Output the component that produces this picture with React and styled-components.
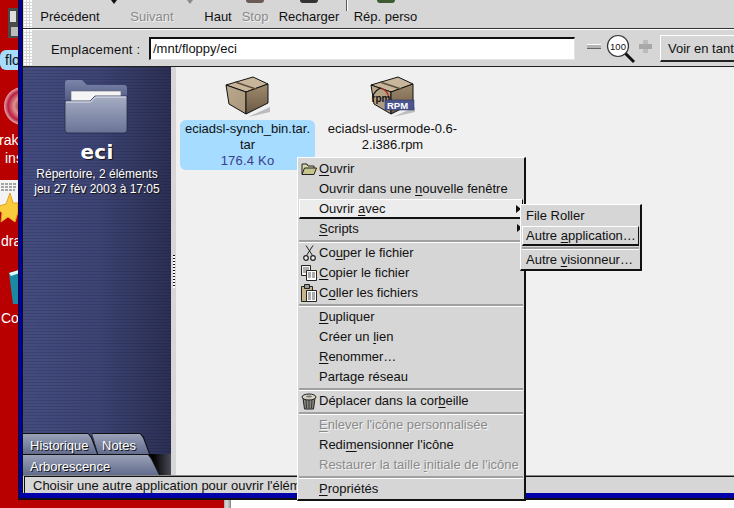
import React from 'react';
import styled, { createGlobalStyle } from 'styled-components';

const GlobalStyle = createGlobalStyle`
  html, body { margin: 0; padding: 0; background: #fff; }
  * { box-sizing: border-box; }
`;

const FONT = '"Liberation Sans", Arial, sans-serif';

function BoxIcon({ rpm }) {
  const id = rpm ? 'r' : 't';
  return (
    <BoxSvg viewBox="0 0 46 41">
      <defs>
        <linearGradient id={id + 'l'} x1="0" y1="0" x2="1" y2="1">
          <stop offset="0" stopColor="#bba98e" />
          <stop offset="1" stopColor="#a8957a" />
        </linearGradient>
        <linearGradient id={id + 'f'} x1="0" y1="0" x2="0" y2="1">
          <stop offset="0" stopColor="#a08b6e" />
          <stop offset="1" stopColor="#6a5944" />
        </linearGradient>
      </defs>
      <path d="M6 31 L23 41 L45 31 L45 36 L23 41 Z" fill="#999" opacity="0.6" />
      <path d="M1 9 L28 1 L43 8 L21 16 Z" fill="#c8b69c" stroke="#111" strokeWidth="1" strokeLinejoin="round" />
      <path d="M1 9 L21 16 L21 38 L4 28 Z" fill={`url(#${id}l)`} stroke="#111" strokeWidth="1" strokeLinejoin="round" />
      <path d="M21 16 L43 8 L43 27 L21 38 Z" fill={`url(#${id}f)`} stroke="#111" strokeWidth="1" strokeLinejoin="round" />
      <path d="M10 6 L31 13" stroke="#5e4e3a" strokeWidth="1.500" />
      {rpm && (
        <>
          <path d="M3 20 A13 13 0 0 1 11 12" fill="none" stroke="#111" strokeWidth="1.300" />
          <path d="M11 12 A13 13 0 0 1 19 22" fill="none" stroke="#b02418" strokeWidth="1.300" />
          <text x="1.500" y="26" fontFamily={FONT} fontWeight="700" fontSize="10" fill="#111">rpm</text>
          <rect x="15" y="24" width="29" height="10" fill="#4b5590" stroke="#2b3060" strokeWidth="0.500" />
          <text x="17" y="32.800" fontFamily={FONT} fontWeight="700" fontSize="9.500" fill="#fff">RPM</text>
        </>
      )}
    </BoxSvg>
  );
}

function FolderIcon() {
  return (
    <svg width="64" height="55" viewBox="0 0 64 55">
      <defs>
        <linearGradient id="fb" x1="0" y1="0" x2="0" y2="1">
          <stop offset="0" stopColor="#7c86aa" />
          <stop offset="1" stopColor="#4c5680" />
        </linearGradient>
        <linearGradient id="ff" x1="0" y1="0" x2="0" y2="1">
          <stop offset="0" stopColor="#a6aec4" />
          <stop offset="1" stopColor="#6a7396" />
        </linearGradient>
      </defs>
      <path d="M1 4 Q1 1 4 1 L18 1 L23 6 L60 6 Q63 6 63 9 L63 20 L1 24 Z" fill="url(#fb)" />
      <path d="M7 12 L57 12 L57 22 L7 24 Z" fill="#f4f4f4" stroke="#667" strokeWidth="0.600" />
      <path d="M1 22 L26 22 L31 17 L63 17 L63 51 Q63 54 60 54 L4 54 Q1 54 1 51 Z" fill="url(#ff)" stroke="#262c48" strokeWidth="0.800" />
      <path d="M2 23 L26.500 23 L31.500 18 L62 18" fill="none" stroke="#e4e8f2" strokeWidth="1" />
    </svg>
  );
}

function OpenFolderGlyph() {
  return (
    <svg width="16" height="14" viewBox="0 0 16 14">
      <path d="M1 12 L1 2 L6 2 L7 4 L13 4 L13 6" fill="#d8d8a8" stroke="#222" strokeWidth="1" />
      <path d="M1 12.500 L3.500 6 L15.500 6 L13 12.500 Z" fill="#c4c48c" stroke="#222" strokeWidth="1" />
    </svg>
  );
}

function ScissorsGlyph() {
  return (
    <svg width="13" height="16" viewBox="0 0 13 16">
      <path d="M3 0.500 L9.500 10.500 M10 0.500 L3.500 10.500" stroke="#222" strokeWidth="1" fill="none" />
      <circle cx="3" cy="13" r="2.300" fill="#f0f0f0" stroke="#222" strokeWidth="1.200" />
      <circle cx="10" cy="13" r="2.300" fill="#f0f0f0" stroke="#222" strokeWidth="1.200" />
    </svg>
  );
}

function CopyGlyph() {
  return (
    <svg width="16" height="16" viewBox="0 0 16 16">
      <path d="M0.500 0.500 H9.500 V10.500 H0.500 Z" fill="#f4f4f4" stroke="#222" />
      <path d="M2 3 H8 M2 5 H8 M2 7 H8" stroke="#666" />
      <path d="M5.500 5.500 H15.500 V15.500 H5.500 Z" fill="#fff" stroke="#222" />
      <path d="M7 8 H14 M7 10 H14 M7 12 H14" stroke="#555" strokeDasharray="3 1" />
    </svg>
  );
}

function PasteGlyph() {
  return (
    <svg width="16" height="18" viewBox="0 0 16 18">
      <path d="M0.500 2.500 H11.500 V17.500 H0.500 Z" fill="#c8b48c" stroke="#222" />
      <path d="M3.500 0.500 H8.500 V4.500 H3.500 Z" fill="#999" stroke="#222" />
      <path d="M5.500 6.500 H15.500 V17.500 H5.500 Z" fill="#fff" stroke="#222" />
      <path d="M7 9 H14 M7 11 H14 M7 13 H14 M7 15 H14" stroke="#555" strokeDasharray="3 1" />
    </svg>
  );
}

function TrashGlyph() {
  return (
    <svg width="16" height="17" viewBox="0 0 16 17">
      <path d="M2 5 L3.500 16 H12.500 L14 5 Z" fill="#8a8a80" stroke="#222" />
      <path d="M5 6 L5.500 15 M8 6 V15 M11 6 L10.500 15" stroke="#333" />
      <ellipse cx="8" cy="4" rx="7" ry="3" fill="#d4d4c4" stroke="#222" />
      <ellipse cx="8" cy="3.500" rx="3" ry="1" fill="#777" />
    </svg>
  );
}

function Magnifier() {
  return (
    <MagnifierSvg viewBox="0 0 32 32">
      <path d="M18 18 L28 28" stroke="#111" strokeWidth="3" />
      <circle cx="12" cy="12" r="10.500" fill="#fff" stroke="#333" strokeWidth="1.200" />
      <text x="12" y="15.500" textAnchor="middle" fontFamily={FONT} fontSize="9.500" fill="#111">100</text>
    </MagnifierSvg>
  );
}

export default function App() {
  return (
    <Screen>
      <GlobalStyle />
      <Desktop>
        <FloppyIcon viewBox="0 0 12 30" width="12" height="30">
          <path d="M0 0 H12 V30 H0 Z" fill="#4a4a4a" />
          <path d="M2 3 H8 V14 H2 Z" fill="#ddd" />
          <path d="M3 19 H12 V28 H3 Z" fill="#bbb" />
        </FloppyIcon>
        <SelectedLabel>flo</SelectedLabel>
        <CdIcon />
        <DeskLabel $top={131}>rak</DeskLabel>
        <DeskLabel $top={149} $left={5}>ins</DeskLabel>
        <StarIcon viewBox="0 0 18 46" width="18" height="46">
          <path d="M0 0 H18 V24 L0 32 Z" fill="#f4f4f4" />
          <path d="M1 4 H17 M1 7 H17 M1 10 H15" stroke="#555" strokeDasharray="3 1" />
          <path d="M10 13 L13 23 L18 23 L18 32 L15 42 L8 37 L1 42 L2 33 L-4 27 L6 24 Z" fill="#f8cc3c" stroke="#e8a020" />
        </StarIcon>
        <DeskLabel $top={232} $left={1}>dra</DeskLabel>
        <TrashIcon viewBox="0 0 10 34" width="10" height="34">
          <path d="M0 3 L10 0 V34 H4 Z" fill="#1a8aa4" />
          <path d="M0 3 L10 0 V3 L2 6 Z" fill="#dff" />
        </TrashIcon>
        <DeskLabel $top={309} $left={1}>Co</DeskLabel>
      </Desktop>

      <Window>
        <Toolbar>
          <Handle />
          <ToolButtons>
            <ToolButton $w={72}>Précédent</ToolButton>
            <ToolDrop />
            <ToolButton $w={60} $dim>Suivant</ToolButton>
            <ToolDrop $dim />
            <ToolButton $w={40}>Haut</ToolButton>
            <ToolButton $w={34} $dim $tip="#6b5a55">Stop</ToolButton>
            <ToolButton $w={74} $tip="#333">Recharger</ToolButton>
            <ToolSep />
            <ToolButton $w={75} $tip="#3d5a32">Rép. perso</ToolButton>
          </ToolButtons>
        </Toolbar>

        <LocationBar>
          <Handle />
          <LocationLabel>Emplacement :</LocationLabel>
          <LocationInput>/mnt/floppy/eci</LocationInput>
          <ZoomMinus />
          <Magnifier />
          <ZoomPlus />
          <ViewButton>Voir en tant</ViewButton>
        </LocationBar>

        <Body>
          <Sidebar>
            <FolderSlot><FolderIcon /></FolderSlot>
            <SideTitle>eci</SideTitle>
            <SideInfo>Répertoire, 2 éléments</SideInfo>
            <SideInfo>jeu 27 fév 2003 à 17:05</SideInfo>
            <Tabs>
              <TabRow>
                <Tab $w={75} $left={0} $right={6}>Historique</Tab>
                <Tab $w={58} $left={6} $right={6} $overlap>Notes</Tab>
              </TabRow>
              <TabRow $dark>
                <Tab $w={137} $left={0} $right={8}>Arborescence</Tab>
              </TabRow>
            </Tabs>
          </Sidebar>
          <Splitter><Grip /></Splitter>
          <Files>
            <FileItem>
              <BoxIcon />
              <FileName $selected>
                eciadsl-synch_bin.tar.<br />tar
                <FileSize>176.4 Ko</FileSize>
              </FileName>
            </FileItem>
            <FileItem>
              <BoxIcon rpm />
              <FileName>eciadsl-usermode-0.6-<br />2.i386.rpm</FileName>
            </FileItem>
          </Files>
        </Body>

        <StatusBar>
          <StatusText>Choisir une autre application pour ouvrir l'élément</StatusText>
        </StatusBar>
      </Window>

      <BelowWindow>
        <RedStrip />
        <ScrollStub />
      </BelowWindow>

      <Menu>
        <MenuItem><Glyph><OpenFolderGlyph /></Glyph><Mn>O</Mn>uvrir</MenuItem>
        <MenuItem>Ouvrir dans une <Mn>n</Mn>ouvelle fenêtre</MenuItem>
        <MenuItem $active $sub>Ouvrir <Mn>a</Mn>vec</MenuItem>
        <MenuItem $sub><Mn>S</Mn>cripts</MenuItem>
        <MenuSep />
        <MenuItem><Glyph><ScissorsGlyph /></Glyph>Co<Mn>u</Mn>per le fichier</MenuItem>
        <MenuItem><Glyph><CopyGlyph /></Glyph><Mn>C</Mn>opier le fichier</MenuItem>
        <MenuItem><Glyph><PasteGlyph /></Glyph>C<Mn>o</Mn>ller les fichiers</MenuItem>
        <MenuSep />
        <MenuItem><Mn>D</Mn>upliquer</MenuItem>
        <MenuItem>Créer un <Mn>l</Mn>ien</MenuItem>
        <MenuItem><Mn>R</Mn>enommer…</MenuItem>
        <MenuItem>Partage réseau</MenuItem>
        <MenuSep />
        <MenuItem><Glyph><TrashGlyph /></Glyph>Déplacer dans la cor<Mn>b</Mn>eille</MenuItem>
        <MenuSep />
        <MenuItem $disabled><Mn>E</Mn>nlever l'icône personnalisée</MenuItem>
        <MenuItem>Redi<Mn>m</Mn>ensionner l'icône</MenuItem>
        <MenuItem $disabled>Restaurer la taille <Mn>i</Mn>nitiale de l'icône</MenuItem>
        <MenuSep />
        <MenuItem><Mn>P</Mn>ropriétés</MenuItem>
      </Menu>

      <SubMenu>
        <SubItem>File Roller</SubItem>
        <SubItem $active>Autre <Mn>a</Mn>pplication…</SubItem>
        <MenuSep />
        <SubItem>Autre <Mn>v</Mn>isionneur…</SubItem>
      </SubMenu>
    </Screen>
  );
}

const Screen = styled.div`
  position: relative;
  width: 734px;
  height: 508px;
  overflow: hidden;
  display: grid;
  grid-template-columns: 18px 716px;
  grid-template-rows: 500px 8px;
  font-family: ${FONT};
  font-size: 13px;
  color: #111;
`;

const Desktop = styled.div`
  position: relative;
  overflow: hidden;
  background: #b80000;
`;

const FloppyIcon = styled.svg`
  position: absolute;
  left: 8px;
  top: 8px;
`;

const SelectedLabel = styled.div`
  position: absolute;
  left: 0;
  top: 50px;
  width: 24px;
  height: 20px;
  line-height: 20px;
  padding-left: 5px;
  border-radius: 6px;
  background: #a5dcff;
  font-size: 14px;
`;

const CdIcon = styled.div`
  position: absolute;
  left: 4px;
  top: 87px;
  width: 38px;
  height: 38px;
  border-radius: 50%;
  background: radial-gradient(circle, #fff 0 3px, #c06060 4px 6px, #e09090 9px, #b82040 15px, #e8a8b0 19px);
`;

const DeskLabel = styled.div`
  position: absolute;
  left: ${p => p.$left ?? -1}px;
  top: ${p => p.$top}px;
  height: 18px;
  line-height: 18px;
  font-size: 14px;
  color: #fff;
  white-space: nowrap;
`;

const StarIcon = styled.svg`
  position: absolute;
  left: 0;
  top: 180px;
  overflow: visible;
`;

const TrashIcon = styled.svg`
  position: absolute;
  left: 9px;
  top: 270px;
`;

const Window = styled.div`
  display: flex;
  flex-direction: column;
  height: 500px;
  background: #d6d6d6;
  border-left: 1px solid #111;
  box-shadow: inset 3px 0 0 #0000a8, inset 4px 0 0 #111;
  padding: 0 0 5px 4px;
  position: relative;
  &::after {
    content: '';
    position: absolute;
    left: 0;
    right: 0;
    bottom: 0;
    height: 5px;
    background: #0000a8;
    border-bottom: 2px solid #111;
  }
`;

const Toolbar = styled.div`
  display: flex;
  height: 29px;
  flex: none;
  border-bottom: 1px solid #333;
  background: #d6d6d6;
`;

const Handle = styled.div`
  flex: none;
  width: 9px;
  margin-left: 1px;
  background-image: radial-gradient(circle at 1px 1px, #fff 0.800px, #9a9a9a 1px, transparent 1.300px);
  background-size: 3px 3px;
  background-color: #d6d6d6;
`;

const ToolButtons = styled.div`
  display: flex;
  padding-left: 1px;
`;

const ToolButton = styled.div`
  width: ${p => p.$w}px;
  position: relative;
  padding-top: 9px;
  line-height: 16px;
  text-align: center;
  white-space: nowrap;
  color: ${p => (p.$dim ? '#8a8a8a' : '#111')};
  ${p => p.$dim && 'text-shadow: 1px 1px 0 #f0f0f0;'}
  &::before {
    content: ${p => (p.$tip ? "''" : 'none')};
    position: absolute;
    top: 0;
    left: 50%;
    width: 18px;
    height: 3px;
    margin-left: -9px;
    background: ${p => p.$tip};
    border-radius: 0 0 9px 9px;
  }
`;

const ToolDrop = styled.div`
  width: 16px;
  height: 4px;
  display: flex;
  justify-content: center;
  &::before {
    content: '';
    width: 0;
    height: 0;
    border-left: 3px solid transparent;
    border-right: 3px solid transparent;
    border-top: 4px solid ${p => (p.$dim ? '#8a8a8a' : '#111')};
  }
`;

const ToolSep = styled.div`
  width: 2px;
  height: 11px;
  background: #fff;
  border-left: 1px solid #555;
`;

const LocationBar = styled.div`
  display: flex;
  align-items: center;
  height: 38px;
  flex: none;
  border-top: 1px solid #fff;
  border-bottom: 1px solid #222;
  background: #d6d6d6;
  & > * {
    flex: none;
  }
  & > ${Handle} {
    align-self: stretch;
  }
`;

const LocationLabel = styled.div`
  width: 97px;
  margin-left: 18px;
  margin-right: 1px;
  padding-top: 2px;
  letter-spacing: 0.200px;
  white-space: nowrap;
`;

const LocationInput = styled.div`
  width: 426px;
  height: 23px;
  line-height: 20px;
  padding-left: 2px;
  background: #fff;
  border: 1px solid #e4e4e4;
  border-top: 2px solid #111;
  border-left: 2px solid #111;
  margin-right: 12px;
  white-space: nowrap;
`;

const ZoomMinus = styled.div`
  width: 14px;
  height: 5px;
  margin-right: 5px;
  margin-bottom: 4px;
  background: #b4b4b4;
  border-top: 1px solid #fff;
  border-bottom: 1px solid #666;
`;

const MagnifierSvg = styled.svg`
  width: 32px;
  height: 32px;
  margin-top: 3px;
`;

const ZoomPlus = styled.div`
  width: 13px;
  height: 13px;
  margin-left: 1px;
  margin-right: 8px;
  margin-bottom: 4px;
  background:
    linear-gradient(#a8a8a8, #a8a8a8) center / 13px 5px no-repeat,
    linear-gradient(#bcbcbc, #bcbcbc) center / 5px 13px no-repeat;
`;

const ViewButton = styled.div`
  height: 27px;
  width: 100px;
  line-height: 25px;
  padding-left: 7px;
  background: #d6d6d6;
  border-top: 1px solid #fff;
  border-left: 1px solid #fff;
  border-bottom: 2px solid #222;
  white-space: nowrap;
`;

const Body = styled.div`
  flex: 1;
  min-height: 0;
  display: flex;
`;

const Sidebar = styled.div`
  width: 148px;
  flex: none;
  display: flex;
  flex-direction: column;
  align-items: center;
  color: #fff;
  background:
    repeating-linear-gradient(180deg, rgba(0, 0, 0, 0.12) 0 1px, rgba(0, 0, 0, 0) 1px 3px),
    linear-gradient(90deg, #444c80 0%, #3d4474 50%, #2b2f54 100%);
`;

const FolderSlot = styled.div`
  height: 65px;
  padding-top: 12px;
  margin-left: -2px;
  line-height: 0;
`;

const SideTitle = styled.div`
  margin-top: 5px;
  height: 30px;
  line-height: 30px;
  font-family: "DejaVu Sans", sans-serif;
  font-size: 20px;
  font-weight: 700;
  letter-spacing: 0.300px;
  text-shadow: 1px 1px 1px #111;
`;

const SideInfo = styled.div`
  height: 15px;
  line-height: 15px;
  font-size: 12px;
  white-space: nowrap;
  text-shadow: 1px 1px 1px #111;
`;

const Tabs = styled.div`
  margin-top: auto;
  align-self: stretch;
`;

const TabRow = styled.div`
  display: flex;
  height: 21px;
  ${p => p.$dark && 'background: linear-gradient(90deg, #000 0, #000 130px, #4a4a58 148px);'}
`;

const Tab = styled.div`
  position: relative;
  width: ${p => p.$w}px;
  height: 21px;
  margin-left: ${p => (p.$overlap ? -6 : 0)}px;
  padding-left: ${p => (p.$overlap ? 10 : 7)}px;
  line-height: 25px;
  font-size: 13px;
  text-shadow: 1px 1px 0 #111;
  z-index: 0;
  clip-path: polygon(${p => p.$left}px 21px, 0 0, calc(100% - ${p => p.$right + 4}px) 0, calc(100% - ${p => p.$right}px) 4px, 100% 21px);
  background: #111;
  &::before {
    content: '';
    position: absolute;
    inset: 1px 1px 0 0;
    z-index: -1;
    clip-path: polygon(${p => p.$left}px 20px, 0 0, calc(100% - ${p => p.$right + 3}px) 0, calc(100% - ${p => p.$right}px) 4px, 100% 20px);
    background: linear-gradient(180deg, #9aa2b8, #626b8c);
  }
`;

const Splitter = styled.div`
  width: 5px;
  flex: none;
  display: flex;
  justify-content: center;
  background: #d6d6d6;
`;

const Grip = styled.div`
  width: 2px;
  height: 33px;
  margin-top: 188px;
  background: repeating-linear-gradient(180deg, #111 0 1.500px, #fff 1.500px 3px);
`;

const Files = styled.div`
  flex: 1;
  display: flex;
  align-items: flex-start;
  gap: 10px;
  padding: 9px 0 0 4px;
  background: #f0f0f0;
`;

const FileItem = styled.div`
  width: 135px;
  display: flex;
  flex-direction: column;
  align-items: center;
`;

const BoxSvg = styled.svg`
  width: 46px;
  height: 41px;
  flex: none;
  margin-bottom: 3px;
`;

const FileName = styled.div`
  width: 100%;
  padding: 1px 0;
  line-height: 16px;
  text-align: center;
  white-space: nowrap;
  border-radius: 6px;
  background: ${p => (p.$selected ? '#a5dcff' : 'transparent')};
`;

const FileSize = styled.div`
  color: #3c3c8c;
  letter-spacing: 0.200px;
`;

const StatusBar = styled.div`
  height: 20px;
  flex: none;
  border-top: 1px solid #888;
  background: #d6d6d6;
`;

const StatusText = styled.div`
  height: 19px;
  line-height: 17px;
  padding-left: 8px;
  margin-left: 1px;
  border-top: 1px solid #111;
  border-left: 1px solid #111;
  white-space: nowrap;
  overflow: hidden;
`;

const BelowWindow = styled.div`
  grid-column: 1 / 3;
  display: flex;
  background: #fff;
`;

const RedStrip = styled.div`
  width: 224px;
  background: #b80000;
`;

const ScrollStub = styled.div`
  width: 7px;
  background: linear-gradient(90deg, #aaa, #ddd 40%, #888);
`;

const Menu = styled.div`
  position: absolute;
  left: 297px;
  top: 157px;
  width: 229px;
  height: 344px;
  padding: 1px 1px 2px 1px;
  background: #d6d6d6;
  border-top: 1px solid #fff;
  border-left: 1px solid #fff;
  border-right: 2px solid #111;
  border-bottom: 2px solid #111;
  z-index: 2;
`;

const MenuItem = styled.div`
  position: relative;
  height: 20px;
  line-height: ${p => (p.$active ? 18 : 20)}px;
  padding-left: 20px;
  white-space: nowrap;
  color: ${p => (p.$disabled ? '#8a8a8a' : '#111')};
  ${p => p.$disabled && 'text-shadow: 1px 1px 0 #f4f4f4;'}
  ${p => p.$active && `
    background: #ececec;
    border-top: 1px solid #fff;
    border-left: 1px solid #fff;
    border-bottom: 2px solid #111;
    border-right: 1px solid #111;
    padding-left: 19px;
  `}
  &::after {
    content: ${p => (p.$sub ? "''" : 'none')};
    position: absolute;
    right: 1px;
    top: 5px;
    border-left: 5px solid #111;
    border-top: 4px solid transparent;
    border-bottom: 4px solid transparent;
  }
`;

const Glyph = styled.span`
  position: absolute;
  left: 1px;
  top: 1px;
  width: 18px;
  height: 18px;
  display: flex;
  align-items: center;
  justify-content: center;
`;

const Mn = styled.span`
  text-decoration: underline;
  text-underline-offset: 2px;
`;

const MenuSep = styled.div`
  height: 4px;
  padding-top: 1px;
  &::before {
    content: '';
    display: block;
    height: 2px;
    background: #a0a0a0;
    border-bottom: 1px solid #fff;
  }
`;

const SubMenu = styled.div`
  position: absolute;
  left: 520px;
  top: 204px;
  width: 122px;
  height: 67px;
  padding: 1px;
  background: #d6d6d6;
  border-top: 1px solid #fff;
  border-left: 1px solid #fff;
  border-right: 2px solid #111;
  border-bottom: 2px solid #111;
  z-index: 3;
`;

const SubItem = styled.div`
  height: 20px;
  line-height: ${p => (p.$active ? 18 : 20)}px;
  padding-left: 4px;
  white-space: nowrap;
  ${p => p.$active && `
    background: #d6d6d6;
    border-top: 1px solid #fff;
    border-left: 1px solid #fff;
    border-bottom: 2px solid #111;
    border-right: 1px solid #111;
    padding-left: 3px;
  `}
`;
